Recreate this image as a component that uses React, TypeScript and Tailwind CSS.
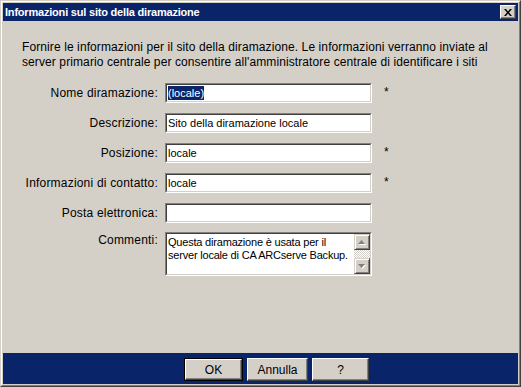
import type { ReactNode } from "react";

const font = { fontFamily: '"Liberation Sans", Arial, sans-serif' };

type FieldProps = {
    label: string;
    children: ReactNode;
    required?: boolean;
    top?: boolean;
};

const Sunken = ({ children, className = "" }: { children: ReactNode; className?: string }) => (
    <div className={`border border-t-[#808080] border-l-[#808080] border-b-white border-r-white ${className}`}>
        <div className="h-full border border-t-[#404040] border-l-[#404040] border-b-[#d4d0c8] border-r-[#d4d0c8] bg-white">
            {children}
        </div>
    </div>
);

const Field = ({ label, children, required, top }: FieldProps) => (
    <div className="flex items-start">
        <div className={`w-[136px] text-right text-[12px] leading-[15px] tracking-[0.2px] text-black ${top ? "pt-0" : "pt-[3px]"}`}>
            {label}
        </div>
        <div className="ml-[7px] w-[207px]">{children}</div>
        <div className="ml-[12px] pt-[2px] text-[12px] leading-[15px] text-black">
            {required ? "*" : ""}
        </div>
    </div>
);

const TextBox = ({ value, selected }: { value: string; selected?: boolean }) => (
    <Sunken className="h-[20px]">
        <div className="flex h-full items-center pl-[1px] text-[11px] leading-[14px] text-black">
            {selected ? <span className="bg-[#0a246a] text-white">{value}</span> : value}
        </div>
    </Sunken>
);

const ScrollArrow = ({ down }: { down?: boolean }) => (
    <div className="flex h-[16px] w-[16px] items-center justify-center border border-t-[#d4d0c8] border-l-[#d4d0c8] border-b-[#404040] border-r-[#404040] bg-[#d4d0c8] shadow-[inset_1px_1px_0_#ffffff,inset_-1px_-1px_0_#808080]">
        <svg width="8" height="5" viewBox="0 0 8 5">
            {down ? (
                <>
                    <path d="M1 1h7l-3.5 4z" fill="#ffffff" />
                    <path d="M0 0h7l-3.5 4z" fill="#808080" />
                </>
            ) : (
                <>
                    <path d="M1 5h7l-3.5-4z" fill="#ffffff" />
                    <path d="M0 4h7l-3.5-4z" fill="#808080" />
                </>
            )}
        </svg>
    </div>
);

const Button = ({ children, width, isDefault }: { children: ReactNode; width: string; isDefault?: boolean }) => (
    <div className={`${width} h-[23px] ${isDefault ? "border border-black" : ""}`}>
        <div className="flex h-full items-center justify-center border border-t-white border-l-white border-b-[#404040] border-r-[#404040] bg-[#d4d0c8] text-[12px] text-black shadow-[inset_-1px_-1px_0_#808080]">
            {children}
        </div>
    </div>
);

export default function App() {
    return (
        <div style={font} className="h-[387px] w-[521px] border border-t-[#d4d0c8] border-l-[#d4d0c8] border-b-[#404040] border-r-[#404040]">
            <div className="flex h-full flex-col border border-t-white border-l-white border-b-[#808080] border-r-[#808080] bg-[#d4d0c8] p-[1px]">
                {/* title bar */}
                <div className="flex h-[18px] items-center justify-between bg-[#0a246a] pl-[2px] pr-[2px]">
                    <span className="text-[11px] font-bold tracking-[-0.2px] text-white">Informazioni sul sito della diramazione</span>
                    <div className="flex h-[14px] w-[16px] items-center justify-center border border-t-white border-l-white border-b-[#404040] border-r-[#404040] bg-[#d4d0c8] shadow-[inset_-1px_-1px_0_#808080]">
                        <svg width="8" height="7" viewBox="0 0 8 7">
                            <path d="M0 0h2l2 2.5L6 0h2L5 3.5 8 7H6L4 4.5 2 7H0l3-3.5z" fill="#000" />
                        </svg>
                    </div>
                </div>

                {/* body */}
                <div className="h-[332px] pl-[19px] pt-[19px]">
                    <p className="text-[12px] leading-[15px] tracking-[0.1px] text-black">
                        Fornire le informazioni per il sito della diramazione. Le informazioni verranno inviate al
                        <br />
                        server primario centrale per consentire all'amministratore centrale di identificare i siti
                    </p>

                    <div className="mt-[13px] flex flex-col gap-[10px]">
                        <Field label="Nome diramazione:" required>
                            <TextBox value="(locale)" selected />
                        </Field>
                        <Field label="Descrizione:">
                            <TextBox value="Sito della diramazione locale" />
                        </Field>
                        <Field label="Posizione:" required>
                            <TextBox value="locale" />
                        </Field>
                        <Field label="Informazioni di contatto:" required>
                            <TextBox value="locale" />
                        </Field>
                        <Field label="Posta elettronica:">
                            <TextBox value="" />
                        </Field>
                        <Field label="Commenti:" top>
                            <Sunken className="-mt-[1px] h-[44px]">
                                <div className="flex h-full">
                                    <div className="flex-1 pl-[1px] pt-[2px] text-[11px] leading-[13px] tracking-[-0.2px] text-black">
                                        Questa diramazione è usata per il
                                        <br />
                                        server locale di CA ARCserve Backup.
                                    </div>
                                    <div className="flex w-[16px] flex-col">
                                        <ScrollArrow />
                                        <div className="flex-1 bg-[repeating-conic-gradient(#ffffff_0%_25%,#d4d0c8_0%_50%)] bg-[length:2px_2px]" />
                                        <ScrollArrow down />
                                    </div>
                                </div>
                            </Sunken>
                        </Field>
                    </div>
                </div>

                {/* footer */}
                <div className="flex h-[31px] items-start gap-[4px] bg-[#0a246a] pl-[181px] pt-[5px]">
                    <Button width="w-[59px]" isDefault>OK</Button>
                    <Button width="w-[61px]">Annulla</Button>
                    <Button width="w-[57px]">?</Button>
                </div>
            </div>
        </div>
    );
}
